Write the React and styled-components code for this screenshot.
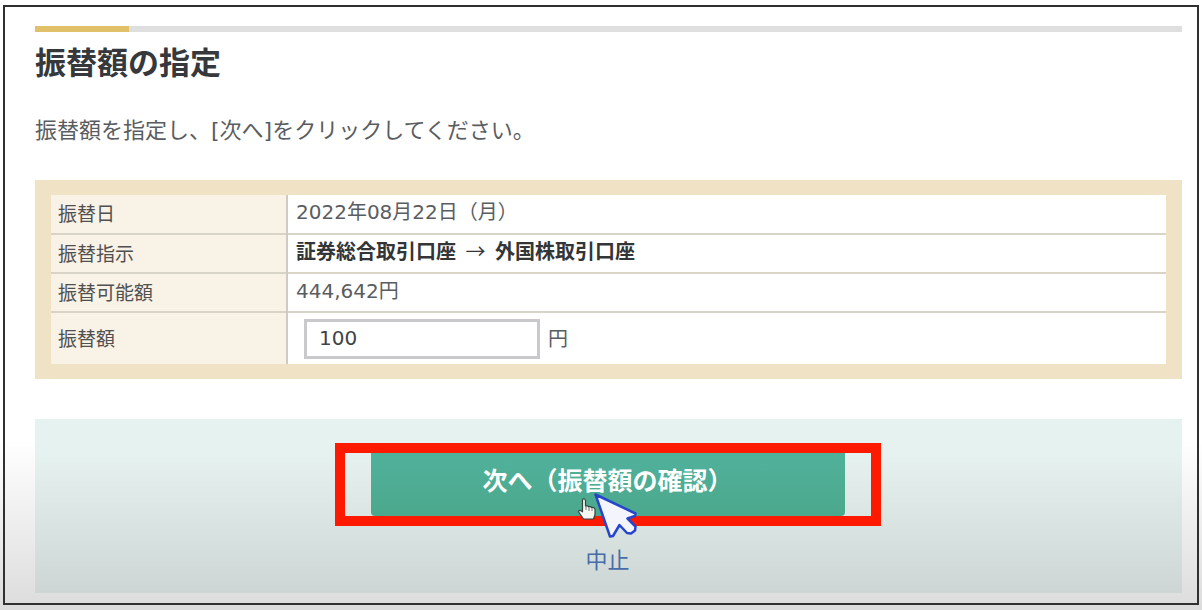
import React, { useState } from 'react';
import styled, { createGlobalStyle } from 'styled-components';

const GlobalStyle = createGlobalStyle`
      * {
        box-sizing: border-box;
      }

      body {
        margin: 0;
        color: #5a5d5f;
        font-family: "DejaVu Sans", "Noto Sans CJK JP", sans-serif;
        font-size: 20px;
      }
`;

const Page = styled.div`
      min-height: 100vh;
      padding: 5px 3px;
      background: linear-gradient(#fff calc(100% - 170px), #dcdcdc 100%);
`;

const Frame = styled.main`
      padding: 19px 15px 10px 30px;
      border: 2px solid #303030;
`;

const Bar = styled.div`
      height: 6px;
      background: linear-gradient(to right, #e0c068 94px, #dfdfdf 94px);
`;

const Title = styled.h1`
      margin: 6px 0 31px;
      color: #36383b;
      font-family: "Noto Sans CJK JP", sans-serif;
      font-size: 31px;
      font-weight: 700;
      line-height: 46px;
`;

const Lead = styled.p`
      margin: 0 0 33px;
      font-size: 22px;
      line-height: 32px;
`;

const Panel = styled.form`
      margin: 0 0 40px;
      padding: 15px 16px;
      background-color: #f0e3c5;
`;

const Table = styled.table`
      width: 100%;
      border-collapse: collapse;
      background-color: #fff;
`;

const Row = styled.tr`
      height: ${props => (props.$tall ? 52 : 39)}px;

      & + & {
        border-top: 2px solid #d9d4c8;
      }
`;

const Head = styled.th`
      width: 236px;
      padding: 0 7px;
      border-right: 2px solid #cfcac2;
      background-color: #f9f2e6;
      color: #505050;
      font-size: 19px;
      font-weight: 400;
      line-height: 28px;
      text-align: left;
`;

const Data = styled.td`
      padding: 0 8px 4px;
      line-height: 28px;
`;

const Route = styled.strong`
      color: #333537;
      font-family: "Noto Sans CJK JP", sans-serif;
      font-size: 20px;
      font-weight: 700;
`;

const Arrow = styled.span`
      margin: 0 5px;
      font-weight: 400;
`;

const Field = styled.div`
      display: flex;
      align-items: center;
      gap: 8px;
      padding: 4px 8px 0;
`;

const Amount = styled.input`
      width: 236px;
      height: 40px;
      padding: 0 12px 2px;
      border: 3px solid #c9c9cb;
      border-radius: 0;
      background-color: #fff;
      color: #404346;
      font: inherit;
      outline: none;
`;

const Actions = styled.div`
      display: flex;
      flex-direction: column;
      align-items: center;
      gap: 19px;
      padding: 24px 18px 16px 16px;
      background: linear-gradient(#e6f2ef 20%, #cdd6d4 100%);
`;

const Highlight = styled.div`
      position: relative;
      width: 100%;
      max-width: 546px;
      padding: 0 26px;
      border: 10px solid #fd1a00;
`;

const NextButton = styled.button`
      display: block;
      width: 100%;
      height: 63px;
      padding: 0 0 12px;
      border: 0;
      border-radius: 0 0 4px 4px;
      background: linear-gradient(#50b19b, #4ba88c);
      color: #fff;
      font-family: "Noto Sans CJK JP", sans-serif;
      font-size: 25px;
      font-weight: 700;
      line-height: 36px;
      cursor: pointer;
`;

const Cancel = styled.a`
      color: #466da8;
      font-size: 22px;
      line-height: 32px;
      text-decoration: none;
`;

const Pointers = styled.svg`
      position: absolute;
      top: 36px;
      left: 50%;
      width: 64px;
      height: 52px;
      margin-left: -32px;
      pointer-events: none;
`;

export default () => {
    const [amount, setAmount] = useState('100');

    return (
        <Page>
            <GlobalStyle />
            <Frame>
                <Bar />
                <Title>振替額の指定</Title>
                <Lead>振替額を指定し、[次へ]をクリックしてください。</Lead>
                <Panel id="transfer" onSubmit={e => e.preventDefault()}>
                    <Table>
                        <tbody>
                            <Row>
                                <Head scope="row">振替日</Head>
                                <Data>2022年08月22日（月）</Data>
                            </Row>
                            <Row>
                                <Head scope="row">振替指示</Head>
                                <Data>
                                    <Route>
                                        証券総合取引口座 <Arrow>→</Arrow> 外国株取引口座
                                    </Route>
                                </Data>
                            </Row>
                            <Row>
                                <Head scope="row">振替可能額</Head>
                                <Data>444,642円</Data>
                            </Row>
                            <Row $tall>
                                <Head scope="row">
                                    <label htmlFor="amount">振替額</label>
                                </Head>
                                <Data>
                                    <Field>
                                        <Amount
                                            id="amount"
                                            type="text"
                                            inputMode="numeric"
                                            value={amount}
                                            onChange={e => setAmount(e.target.value)}
                                        />
                                        <span>円</span>
                                    </Field>
                                </Data>
                            </Row>
                        </tbody>
                    </Table>
                </Panel>
                <Actions>
                    <Highlight>
                        <NextButton type="submit" form="transfer">次へ（振替額の確認）</NextButton>
                        <Pointers viewBox="0 0 64 52" aria-hidden="true">
                            <path
                                d="M7 10c1.5-.6 2.5.2 2.5 2v5l2-.2 1 .9 2-.2 1 1 2-.1 1.5 1.600v5.500l-1.500 4.500H7.500L3 23.500c-1-1.500.2-2.700 2-1.700l1.500 1V11z"
                                fill="#f7f4f2"
                                stroke="#35433f"
                                strokeWidth="1.2"
                                strokeLinejoin="round"
                            />
                            <path d="M10 17v4M13 18v4M16 19v3" stroke="#6b7572" strokeWidth="1" />
                            <path
                                d="M19.500 5.500L59.500 24.500L59 27L51.500 29.500L59.500 37.500L59 41.500L55 44.500L51 44L43.500 36L37 47L34 47.500Z"
                                fill="#f4f5fc"
                                stroke="#2745cc"
                                strokeWidth="2.500"
                                strokeLinejoin="round"
                            />
                        </Pointers>
                    </Highlight>
                    <Cancel href="#cancel">中止</Cancel>
                </Actions>
            </Frame>
        </Page>
    );
}
